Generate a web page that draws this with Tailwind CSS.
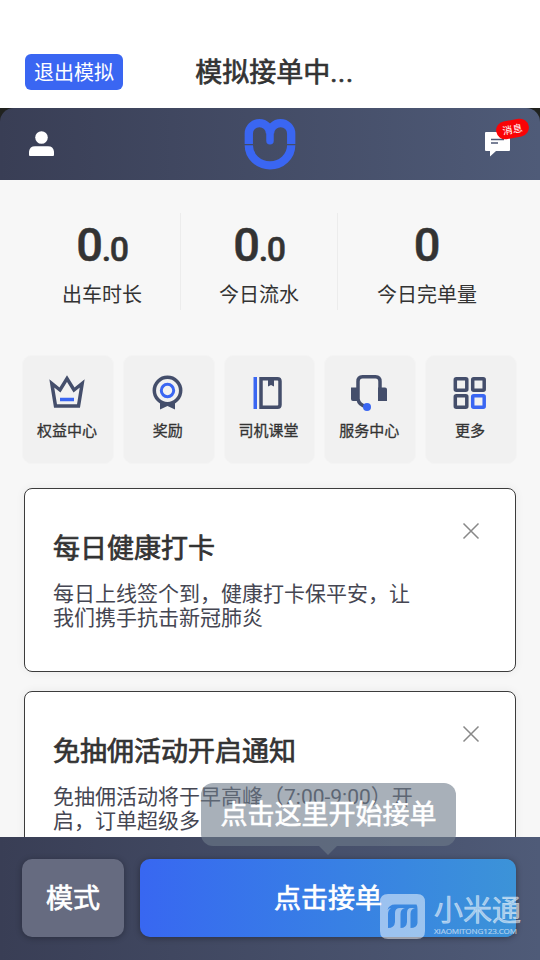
<!DOCTYPE html>
<html lang="zh-CN">
<head>
<meta charset="utf-8">
<title>模拟接单中</title>
<script src="https://cdn.jsdelivr.net/npm/@tailwindcss/browser@4"></script>
</head>
<body class="bg-white">
<div class="relative flex h-[960px] w-[540px] flex-col overflow-hidden bg-[#f7f7f7] font-['Roboto','Noto_Sans_CJK_SC',sans-serif] text-[#333333]">

  <!-- Title bar -->
  <header class="grid h-[108px] shrink-0 grid-cols-[98px_1fr_98px] items-center bg-white px-[25px] pt-9">
    <button class="flex h-9 items-center justify-center rounded-md bg-[#3a66f2] pt-px text-[20px] leading-none text-white">退出模拟</button>
    <h1 class="pt-0.5 pl-[9px] text-center text-[27px] leading-none [-webkit-text-stroke:0.7px]">模拟接单中<span class="tracking-[0.7px]">...</span></h1>
  </header>

  <!-- Navigation -->
  <div class="shrink-0 bg-[#20221f]">
    <nav class="flex h-[72px] items-center justify-between rounded-t-[14px] bg-linear-to-r from-[#393e55] to-[#4f5b78] px-[29px]">
      <svg class="h-[26px] w-[52px]" viewBox="0 0 52 26" fill="#fff"><circle cx="12.500" cy="6.500" r="6.300"/><path d="M0 24V20.500C0.500 17 2.500 15.300 6 15.300H19C22.500 15.300 24.500 17 25 20.500V24Q25 25 24 25H1Q0 25 0 24Z"/></svg>
      <svg class="h-[52px] w-[52px]" viewBox="0 0 52 52" fill="none" stroke="#3a66f2"><path stroke-width="8.300" d="M4.800 26V15.500A10.600 10.400 0 0 1 26 15.500A10.600 10.400 0 0 1 47.200 15.500V26M4.800 27.300A21.200 20 0 0 0 47.200 27.300"/><path stroke-width="7.500" stroke-linecap="round" d="M26 14v8.800"/></svg>
      <div class="relative flex h-[26px] w-[52px] justify-end">
        <svg class="mr-px h-[26px] w-[25px]" viewBox="0 0 25 26"><path fill="#fff" d="M1 1h23q1 0 1 1v17q0 1-1 1H11l-6 5.500V20H1q-1 0-1-1V2q0-1 1-1z"/><path stroke="#4d5875" stroke-width="1.400" d="M6 8.500h13M6 12h7"/></svg>
        <span class="absolute -top-[11px] -right-[18px] flex h-[18px] w-[33px] -rotate-10 items-center justify-center rounded-full bg-[#fa0306] pt-px text-[10px] leading-none text-white">消息</span>
      </div>
    </nav>
  </div>

  <!-- Statistics -->
  <section class="grid h-[175px] shrink-0 grid-cols-[157px_157px_157px] px-6 pt-[33px] text-center">
    <div class="h-[97px] border-r border-[#ececec]">
      <div class="h-[70px] pt-2 text-[47px] leading-[48px] font-medium tracking-[-1.3px] [-webkit-text-stroke:0.5px]">0<span class="text-[34px]">.0</span></div>
      <div class="text-[20px] leading-6">出车时长</div>
    </div>
    <div class="h-[97px] border-r border-[#ececec]">
      <div class="h-[70px] pt-2 text-[47px] leading-[48px] font-medium tracking-[-1.3px] [-webkit-text-stroke:0.5px]">0<span class="text-[34px]">.0</span></div>
      <div class="text-[20px] leading-6">今日流水</div>
    </div>
    <div class="h-[97px] pl-[21px]">
      <div class="h-[70px] pt-2 text-[47px] leading-[48px] font-medium [-webkit-text-stroke:0.5px]">0</div>
      <div class="text-[20px] leading-6">今日完单量</div>
    </div>
  </section>

  <!-- Shortcuts -->
  <section class="grid h-[109px] shrink-0 grid-cols-5 gap-[9px] pr-[23px] pl-[22px] text-[15px] leading-5 [-webkit-text-stroke:0.3px]">
    <a class="flex h-[109px] flex-col items-center gap-[7px] rounded-[10px] border border-[#f4f4f4] bg-[#f1f1f1] pt-[18px] pr-0.5">
      <svg class="size-10" viewBox="0 0 40 40" fill="none"><path stroke="#444e6b" stroke-width="3.500" d="M4.800 9.500l3.700 22.500h23l3.700-22.500-8.200 6.500-7-11.500-7 11.500z"/><path stroke="#3a66f2" stroke-width="3.500" d="M13 25.500h14"/></svg>
      权益中心
    </a>
    <a class="flex h-[109px] flex-col items-center gap-[7px] rounded-[10px] border border-[#f4f4f4] bg-[#f1f1f1] pt-[18px] pr-0.5">
      <svg class="size-10" viewBox="0 0 40 40" fill="none"><path fill="#444e6b" d="M12 27v8.500l7.500-3.500 7.500 3.500V27z"/><circle cx="19.500" cy="16.500" r="13.200" fill="#f1f1f1" stroke="#444e6b" stroke-width="3.500"/><circle cx="19.500" cy="16.500" r="6.200" stroke="#3a66f2" stroke-width="3"/></svg>
      奖励
    </a>
    <a class="flex h-[109px] flex-col items-center gap-[7px] rounded-[10px] border border-[#f4f4f4] bg-[#f1f1f1] pt-[18px] pr-0.5">
      <svg class="size-10" viewBox="0 0 40 40" fill="none"><path fill="#3a66f2" d="M5.500 3H9v32H5.500z"/><path stroke="#444e6b" stroke-width="3.500" d="M13 4.700h16.500q2.500 0 2.500 2.500v23.500q0 2.500-2.500 2.500H13z"/><path fill="#444e6b" d="M20 4h6v8.500l-3-1.500-3 1.500z"/></svg>
      司机课堂
    </a>
    <a class="flex h-[109px] flex-col items-center gap-[7px] rounded-[10px] border border-[#f4f4f4] bg-[#f1f1f1] pt-[18px] pr-0.5">
      <svg class="size-10" viewBox="0 0 40 40" fill="none"><path stroke="#444e6b" stroke-width="3.500" d="M9 26V7.500Q9 2.700 13.500 2.700h13Q31 2.700 31 7.500V26M9 25q1 6.500 8.500 7.500"/><path fill="#444e6b" d="M2 13.500h8v13.500H4q-2 0-2-2zM29 13.500h7q2 0 2 2v11.500h-9z"/><circle cx="18" cy="33" r="4" fill="#3a66f2"/></svg>
      服务中心
    </a>
    <a class="flex h-[109px] flex-col items-center gap-[7px] rounded-[10px] border border-[#f4f4f4] bg-[#f1f1f1] pt-[18px] pr-0.5">
      <svg class="size-10" viewBox="0 0 40 40" fill="none" stroke="#444e6b" stroke-width="3.500"><rect x="5.300" y="4.700" width="11.500" height="11.500" rx="1"/><rect x="22.700" y="4.700" width="11.500" height="11.500" rx="1"/><rect x="5.300" y="21.800" width="11.500" height="11.500" rx="1"/><rect x="22.700" y="21.800" width="11.500" height="11.500" rx="1" stroke="#3a66f2"/></svg>
      更多
    </a>
  </section>

  <!-- Notices -->
  <main class="flex min-h-0 flex-1 flex-col gap-[19px] overflow-hidden px-6 pt-6">
    <article class="flex h-[184px] shrink-0 justify-between rounded-lg border border-[#3c3c3c] bg-white pr-[35px] pl-7 shadow-[0_0_10px_rgba(0,0,0,0.06)]">
      <div class="w-[370px]">
        <h2 class="pt-11 text-[27px] leading-8 [-webkit-text-stroke:0.7px]">每日健康打卡</h2>
        <p class="pt-[17px] text-[21px] leading-6 text-[#454652]">每日上线签个到，健康打卡保平安，让<br>我们携手抗击新冠肺炎</p>
      </div>
      <svg class="mt-[33px] size-[18px]" viewBox="0 0 18 18" stroke="#888" stroke-width="1.500"><path d="M1.500 1.500l15 15m0-15l-15 15"/></svg>
    </article>
    <article class="flex h-[184px] shrink-0 justify-between rounded-lg border border-[#3c3c3c] bg-white pr-[35px] pl-7 shadow-[0_0_10px_rgba(0,0,0,0.06)]">
      <div class="w-[370px]">
        <h2 class="pt-11 text-[27px] leading-8 [-webkit-text-stroke:0.7px]">免抽佣活动开启通知</h2>
        <p class="pt-[17px] text-[21px] leading-6 text-[#454652]">免抽佣活动将于早高峰（7:00-9:00）开<br>启，订单超级多</p>
      </div>
      <svg class="mt-[33px] size-[18px]" viewBox="0 0 18 18" stroke="#888" stroke-width="1.500"><path d="M1.500 1.500l15 15m0-15l-15 15"/></svg>
    </article>
  </main>

  <!-- Bottom actions -->
  <footer class="flex h-[123px] shrink-0 gap-4 bg-linear-to-r from-[#393e55] to-[#4f5b78] pt-[22px] pr-6 pl-[22px] text-[27px] leading-none text-white [-webkit-text-stroke:0.7px]">
    <button class="h-[78px] w-[102px] rounded-[10px] bg-[#666b80] pt-0.5 shadow-[0_1px_6px_rgba(0,0,0,0.3)]">模式</button>
    <button class="h-[78px] flex-1 rounded-[10px] bg-linear-to-r from-[#3867f1] to-[#3c93d8] pt-0.5 shadow-[0_1px_6px_rgba(0,0,0,0.35)]">点击接单</button>
  </footer>

  <!-- Start hint -->
  <div class="absolute top-[783px] left-[201px] flex h-[63px] w-[255px] items-center justify-center rounded-xl bg-[#6e7b8b]/60 pt-0.5 text-[27px] leading-none text-white [-webkit-text-stroke:0.6px]">
    点击这里开始接单
    <svg class="absolute top-[63px] left-[118px] h-[9px] w-[18px]" viewBox="0 0 18 9"><path fill="#6e7b8b" fill-opacity=".6" d="M0 0h18L9 9z"/></svg>
  </div>

  <!-- Watermark -->
  <div class="absolute top-[894px] left-[380px] flex gap-[9px] text-white/50">
    <svg class="h-[45px] w-[45px]" viewBox="0 0 45 45"><path fill="currentColor" fill-rule="evenodd" d="M8 0h29q8 0 8 8v29q0 8-8 8H8q-8 0-8-8V8q0-8 8-8zM7.500 16Q9 10.500 15 10.500H36.500Q37.500 12 37.500 15V29Q37 34 30.500 34V20Q30.500 15 35 14H31Q27 14 27 19V28Q26.500 34 20.500 34V20Q20.500 15 25 14H20Q15 14 15 19V28Q14.500 34 8 34V20Q8 16 11 14Q9 14 7.500 16Z"/></svg>
    <div class="w-[90px] whitespace-nowrap">
      <div class="pt-px text-[29px] leading-[32px] [-webkit-text-stroke:0.7px]">小米通</div>
      <div class="mt-px w-[87px] origin-left scale-x-[1.15] font-['Open_Sans',sans-serif] text-[7px] leading-[7px] tracking-[-0.1px] [-webkit-text-stroke:0.2px]">XIAOMITONG123.COM</div>
    </div>
  </div>
</div>
</body>
</html>
